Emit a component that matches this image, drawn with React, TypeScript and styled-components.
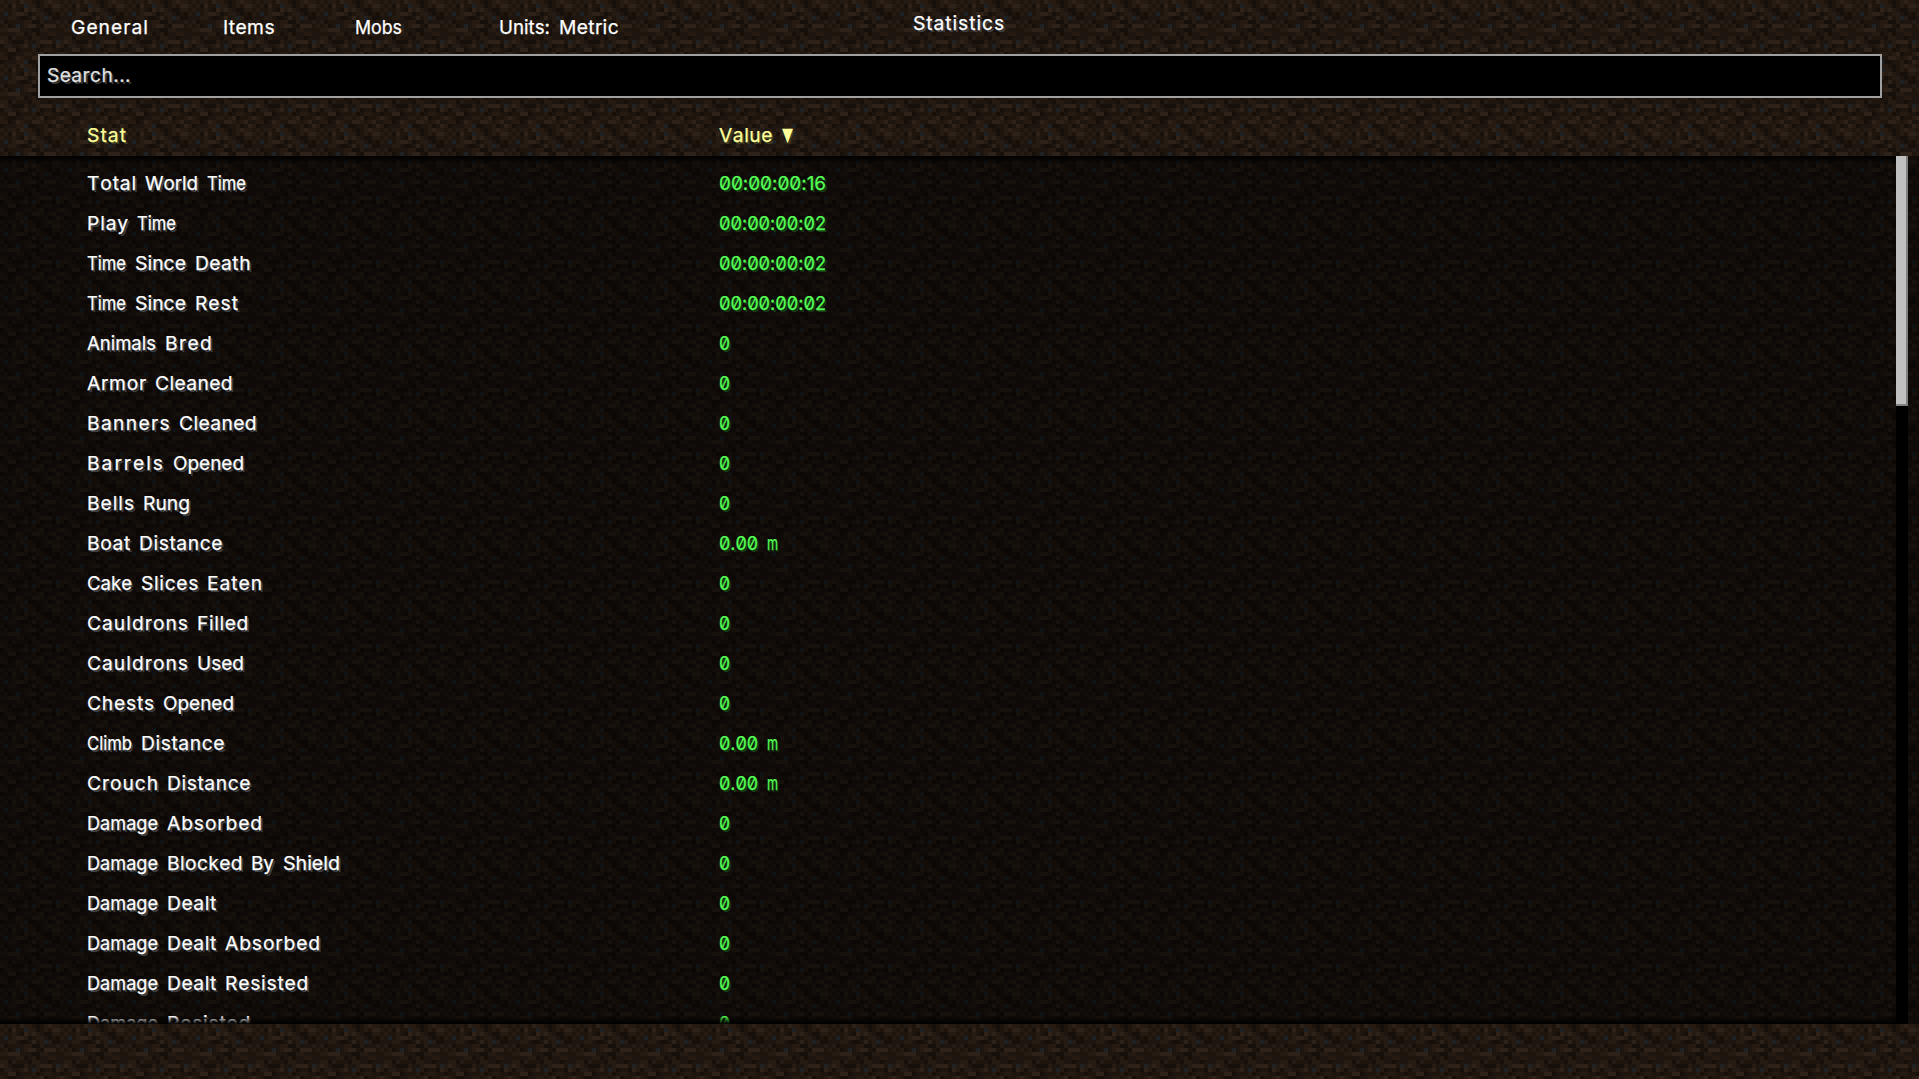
import React from 'react';
import styled, { createGlobalStyle } from 'styled-components';

/* 16x16 dirt tile: d = dark, m = mid, b = brown, l = light, g = gravel */
const DIRT = [
  'bmbbmlbbmdmblbbm',
  'mbdlmmgbbdmbmllb',
  'bmmbmdlblbmddbbm',
  'mgmbllbdmbbmdmdb',
  'mmbbmddmlmbgbddm',
  'bdmmmmbbddbmmmbm',
  'mbdmgmbllmdlllmb',
  'bblllmmmddbbmmmm',
  'mmmmbbdmbdmmbbmm',
  'bbdbmmmdbbmmdmmm',
  'lbmdddbmmblllmgb',
  'dbbmmblmgbdmmdlb',
  'mmlldmmmbdmbbmmd',
  'bmddmmbbmbldmmbl',
  'bbdmlbmmllbmblmm',
  'dmmmbbgddmmbdmlb',
];

const DIRT_COLORS: Record<string, string> = {
  d: '#160f0a',
  m: '#1e150f',
  b: '#261b12',
  l: '#2f2219',
  g: '#1e2225',
};

const dirtSvg =
  '<svg xmlns="http://www.w3.org/2000/svg" width="64" height="64" viewBox="0 0 16 16" shape-rendering="crispEdges">' +
  DIRT.map((row, y) =>
    row
      .split('')
      .map((c, x) => `<rect x="${x}" y="${y}" width="1" height="1" fill="${DIRT_COLORS[c]}"/>`)
      .join(''),
  ).join('') +
  '</svg>';

const dirtUrl = `url("data:image/svg+xml,${encodeURIComponent(dirtSvg)}")`;

const FONT_SIZE = 19.25;
const FONT_FAMILY = 'Inter, "DejaVu Sans", sans-serif';
const PIXEL = 2;

/* Glyph advances in font pixels; everything not listed takes six. */
const ADVANCES: Record<string, number> = {
  i: 2, l: 3, t: 4, I: 4, k: 5, f: 5, ':': 2, '.': 2,
};

const measureContext = document.createElement('canvas').getContext('2d');

function naturalWidth(word: string) {
  if (!measureContext) return word.length * 11;
  measureContext.font = `${FONT_SIZE}px ${FONT_FAMILY}`;
  measureContext.fontKerning = 'none';
  return measureContext.measureText(word).width;
}

function pixelWidth(word: string) {
  return word.split('').reduce((sum, c) => sum + (ADVANCES[c] ?? 6), 0) * PIXEL;
}

const GlobalStyle = createGlobalStyle`
  body {
    margin: 0;
    background: #1e150f;
    overflow: hidden;
  }
`;

const Screen = styled.div`
  display: flex;
  flex-direction: column;
  width: 100vw;
  height: 100vh;
  background: ${dirtUrl} 0 0 / 64px 64px;
  font-family: ${FONT_FAMILY};
  font-size: ${FONT_SIZE}px;
  font-kerning: none;
  font-feature-settings: 'zero' 1, 'calt' 0;
  line-height: 40px;
  color: #fff;
`;

const Header = styled.header`
  display: flex;
  flex-direction: column;
  flex: none;
  height: 156px;
`;

const Toolbar = styled.nav`
  display: grid;
  grid-template-columns: 152px 132px 144px 414px 1fr;
  height: 47px;
  padding: 7px 0 0 71px;
`;

const Title = styled.h1`
  margin: -4px 0 0;
  font: inherit;
`;

const SearchBox = styled.div`
  box-sizing: border-box;
  height: 44px;
  margin: 0 37px 0 38px;
  padding: 0 7px;
  border: 2px solid #a0a0a0;
  background: #000;
  line-height: 39px;
`;

const columns = `
  display: grid;
  grid-template-columns: 632px 1fr;
  padding-left: 87px;
`;

const ColumnTitles = styled.div`
  ${columns}
  padding-top: 17px;
  height: 41px;
`;

const Body = styled.main`
  position: relative;
  display: flex;
  flex: none;
  height: 868px;
  background:
    linear-gradient(rgba(0, 0, 0, 0.5), rgba(0, 0, 0, 0.5)),
    ${dirtUrl} 0 0 / 64px 64px;
`;

const Rows = styled.div`
  flex: 1;
  height: 861px;
  padding-top: 7px;
  overflow: hidden;
`;

const Row = styled.div`
  ${columns}
  height: 40px;
`;

const Fade = styled.div<{ $edge: 'top' | 'bottom' }>`
  position: absolute;
  left: 0;
  right: 23px;
  ${(p) => p.$edge}: 0;
  height: 8px;
  background: linear-gradient(to ${(p) => p.$edge}, rgba(0, 0, 0, 0), #000);
`;

const ScrollTrack = styled.div`
  position: relative;
  flex: none;
  width: 12px;
  margin-right: 11px;
  background: #000;
`;

const ScrollThumb = styled.div`
  box-sizing: border-box;
  height: 250px;
  border: solid #808080;
  border-width: 0 2px 2px 0;
  background: #c0c0c0;
`;

const Label = styled.span<{ $color?: string; $shadow?: string }>`
  display: inline-flex;
  gap: 8px;
  white-space: pre;
  color: ${(p) => p.$color ?? '#fff'};
  text-shadow: ${(p) => (p.$shadow ? `2px 2px 0 ${p.$shadow}` : 'none')};
`;

const Word = styled.span`
  display: block;
  transform-origin: left;
  -webkit-text-stroke: 0.25px currentColor;
`;

const SortArrow = styled.span`
  display: block;
  width: 10px;
  margin-left: 1px;
  font-family: 'DejaVu Sans', sans-serif;
  font-size: 19px;
  transform: translateY(-1px) scaleX(0.75);
  transform-origin: left;
`;

interface TextProps {
  text: string;
  color?: string;
  shadow?: string;
  children?: React.ReactNode;
}

/* Wide words are condensed, narrow ones are tracked out, so each keeps its pixel-font width. */
function wordStyle(word: string): React.CSSProperties {
  const width = pixelWidth(word);
  const natural = naturalWidth(word);
  if (natural > width - PIXEL) {
    return { width, transform: `scaleX(${(width - PIXEL / 2) / natural})` };
  }
  return { width, letterSpacing: (width - natural) / word.length };
}

function Text({ text, color, shadow, children }: TextProps) {
  return (
    <Label $color={color} $shadow={shadow}>
      {text.split(' ').map((word, i) => (
        <Word key={i} style={wordStyle(word)}>
          {word}
        </Word>
      ))}
      {children}
    </Label>
  );
}

const TABS = ['General', 'Items', 'Mobs', 'Units: Metric'];

const STATS: [string, string][] = [
  ['Total World Time', '00:00:00:16'],
  ['Play Time', '00:00:00:02'],
  ['Time Since Death', '00:00:00:02'],
  ['Time Since Rest', '00:00:00:02'],
  ['Animals Bred', '0'],
  ['Armor Cleaned', '0'],
  ['Banners Cleaned', '0'],
  ['Barrels Opened', '0'],
  ['Bells Rung', '0'],
  ['Boat Distance', '0.00 m'],
  ['Cake Slices Eaten', '0'],
  ['Cauldrons Filled', '0'],
  ['Cauldrons Used', '0'],
  ['Chests Opened', '0'],
  ['Climb Distance', '0.00 m'],
  ['Crouch Distance', '0.00 m'],
  ['Damage Absorbed', '0'],
  ['Damage Blocked By Shield', '0'],
  ['Damage Dealt', '0'],
  ['Damage Dealt Absorbed', '0'],
  ['Damage Dealt Resisted', '0'],
  ['Damage Resisted', '0'],
];

export default function App() {
  return (
    <>
      <GlobalStyle />
      <Screen>
        <Header>
          <Toolbar>
            {TABS.map((tab) => (
              <Text key={tab} text={tab} />
            ))}
            <Title>
              <Text text="Statistics" shadow="#3e4145" />
            </Title>
          </Toolbar>
          <SearchBox>
            <Text text="Search..." color="#e0e0e0" shadow="#383838" />
          </SearchBox>
          <ColumnTitles>
            <Text text="Stat" color="#ffff99" shadow="#3f3f26" />
            <Text text="Value" color="#ffff99" shadow="#3f3f26">
              <SortArrow>▼</SortArrow>
            </Text>
          </ColumnTitles>
        </Header>
        <Body>
          <Rows>
            {STATS.map(([name, value]) => (
              <Row key={name}>
                <Text text={name} shadow="#3e4145" />
                <Text text={value} color="#55ff55" shadow="#153f15" />
              </Row>
            ))}
          </Rows>
          <ScrollTrack>
            <ScrollThumb />
          </ScrollTrack>
          <Fade $edge="top" />
          <Fade $edge="bottom" />
        </Body>
      </Screen>
    </>
  );
}
